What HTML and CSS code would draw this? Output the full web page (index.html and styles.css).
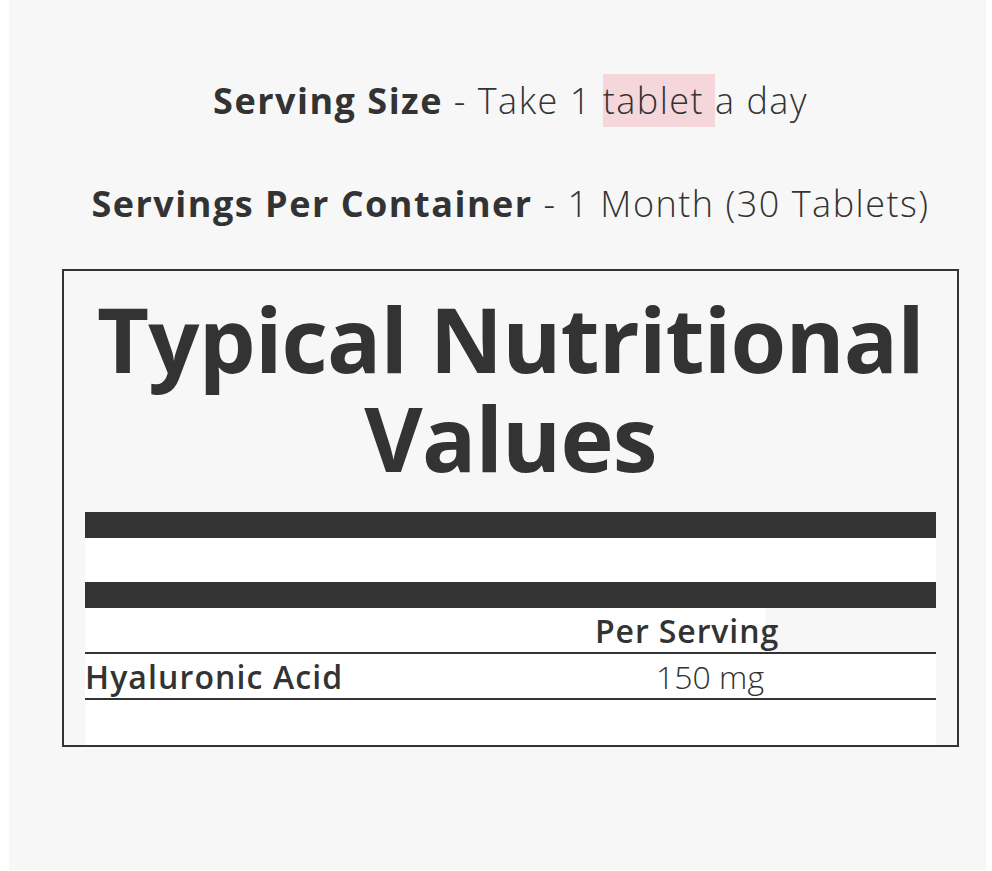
FILE: index.html
```html
<!DOCTYPE html>
<html lang="en">
<head>
  <meta charset="utf-8">
  <meta name="viewport" content="width=device-width, initial-scale=1.0">
  <title>Nutritional Values</title>
  <link rel="stylesheet" href="styles.css">
</head>
<body>
  <div class="page">
    <!-- Порция -->
    <div class="info">
      <p><strong>Serving Size</strong> - Take 1 <mark>tablet </mark>a day</p>
      <p><strong>Servings Per Container</strong> - 1 Month (30 Tablets)</p>
    </div>

    <!-- Таблица -->
    <div class="facts">
      <h1>Typical Nutritional Values</h1>
      <div class="facts-table">
        <div class="bar"></div>
        <div class="blank"></div>
        <div class="bar"></div>
        <div class="row head">
          <span></span>
          <span class="value">Per Serving</span>
        </div>
        <div class="row item">
          <span class="name">Hyaluronic Acid</span>
          <span class="value">150 mg</span>
        </div>
        <div class="blank last"></div>
      </div>
    </div>
  </div>
</body>
</html>
```

FILE: styles.css
```css
body {
  margin: 0; padding: 0;
  background: #fff;
  font-family: "Open Sans", "Liberation Sans", sans-serif;
  color: #333;
}
.page {
  margin-left: 9px;
  width: 977px; height: 870px;
  background: #f7f7f7;
  padding: 0 27px 0 53px;
  box-sizing: border-box;
}
.info {
  display: flex; flex-direction: column; gap: 51px;
  padding: 75px 0 39px;
  text-align: center;
}
.info p {
  margin: 0;
  font-size: 36px; line-height: 52px;
  font-weight: 300; letter-spacing: 1.5px;
}
.info strong { font-weight: 700; }
.info mark {
  background: #f5d6db; color: inherit;
  padding: 2px 0;
}

/* Рамка с таблицей */
.facts {
  border: 2px solid #333;
  padding: 18px 21px 0;
}
.facts h1 {
  margin: 0 0 25px;
  font-size: 90px; line-height: 99px;
  font-weight: 700; text-align: center;
  letter-spacing: -0.8px;
}
.facts-table { display: flex; flex-direction: column; }
.bar { height: 26px; background: #333; }
.blank { height: 44px; background: #fff; }
.blank.last { height: 45px; }
.row {
  display: grid;
  grid-template-columns: 399px 452px;
  align-items: center;
  height: 44px;
  font-size: 32px;
}
.row.head {
  background: linear-gradient(90deg, #fff 680px, transparent 680px);
  border-bottom: 2px solid #333;
  font-weight: 600;
  letter-spacing: 0.9px;
}
.row.head .value { padding-right: 46px; }
.row.item {
  background: #fff;
  border-bottom: 2px solid #333;
}
.row .name { font-weight: 600; letter-spacing: 1.1px; }
.row .value { text-align: center; white-space: nowrap; }
.row.item .value { font-weight: 300; }
```
